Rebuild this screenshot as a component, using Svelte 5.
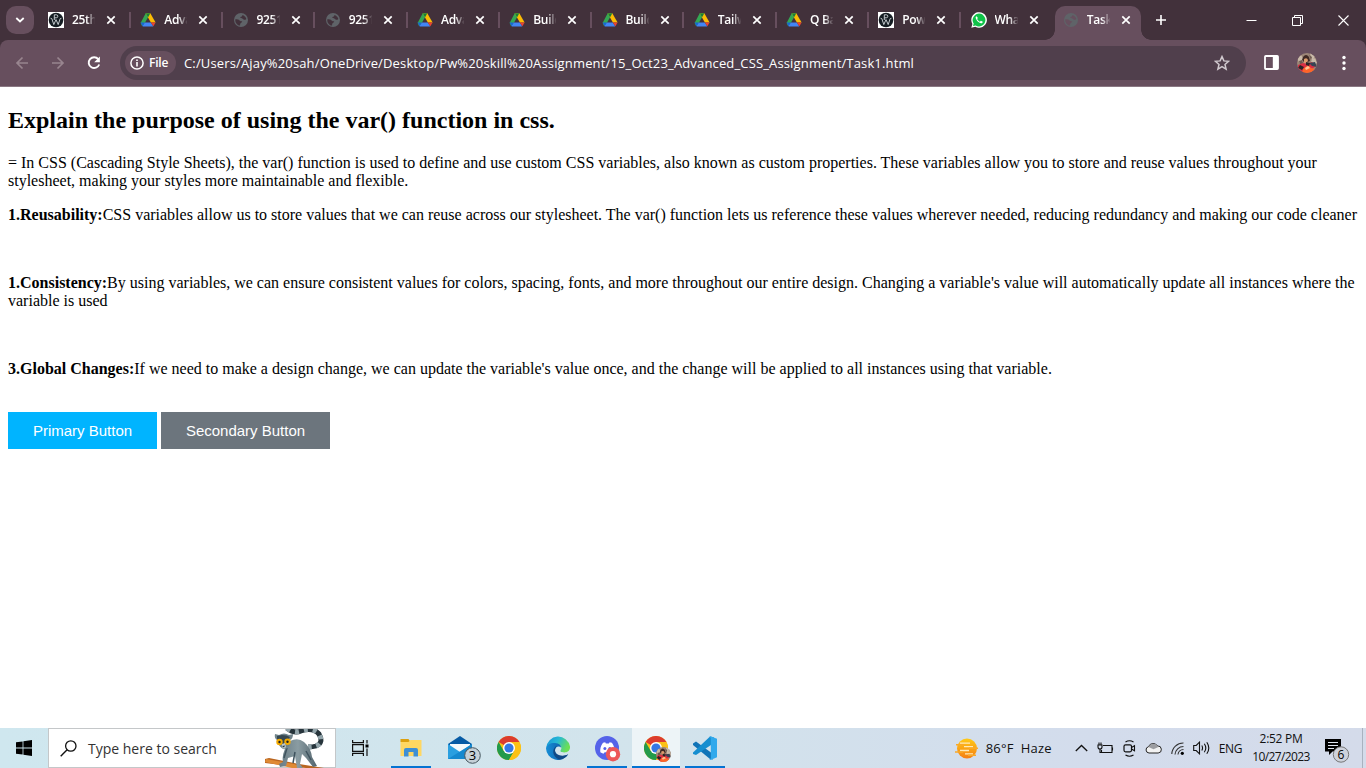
<script>
  const tabs = [
    { icon: 'pw', title: '25th' },
    { icon: 'drive', title: 'Adva' },
    { icon: 'globe', title: '9251' },
    { icon: 'globe', title: '9251' },
    { icon: 'drive', title: 'Adva' },
    { icon: 'drive', title: 'Build' },
    { icon: 'drive', title: 'Build' },
    { icon: 'drive', title: 'Tailw' },
    { icon: 'drive', title: 'Q Ba' },
    { icon: 'pw', title: 'Pow' },
    { icon: 'whatsapp', title: 'Wha' },
    { icon: 'globe', title: 'Task', active: true }
  ];
</script>

{#snippet favicon(name)}
  <svg class="fav" width="16" height="16" viewBox="0 0 16 16">
    {#if name === 'pw'}
      <rect width="16" height="16" fill="#fff" />
      <circle cx="8" cy="8" r="7.3" fill="#151c22" />
      <path d="M6.300 8V2.800h2a1.500 1.500 0 0 1 0 3H6.300M2.600 6.300l1.200.3 2 6L8 7.600l2.200 5 2-6 1.200-.3" fill="none" stroke="#c3c8cc" stroke-width="1" />
    {:else if name === 'drive'}
      <path d="M5.7 1.3h4.6L4.1 12.2l-2 2L.6 11.1z" fill="#34a853" />
      <path d="M5.7 1.3h4.6l5.3 9.3h-4.7L8 5.5z" fill="#fbbc04" />
      <path d="M5.7 1.3h4.6L8 5.5z" fill="#188038" />
      <path d="M4.8 10.4h6l2.5 4H3.1L2.4 14z" fill="#4285f4" />
      <path d="M.6 10.4h4.2l-2.2 3.8z" fill="#1967d2" />
      <path d="M10.8 10.4h4.8l-2.2 3.8z" fill="#ea4335" />
    {:else if name === 'globe'}
      <circle cx="8" cy="8" r="7" fill="#5f6368" />
      <path d="M2.3 7.2c2 .1 3.6.2 4.1 1.1.5 1 1.4.9 2.8.9-.2 1.7-1.8 1.4-2 2.9L7 13.6C4 13.2 2 10.7 2.3 7.2zM7.4 5.9c-.2-1.5 1.9-.8 2-2.9 1.8.5 3.4 2 3.9 4-.8 1-2.3 1.2-3 .3-.6-.8-1.6-1.4-2.9-1.4z" fill="var(--globe-land)" />
    {:else}
      <path d="M.3 15.8 1.4 12A7.8 7.8 0 1 1 4.3 14.8z" fill="#fff" />
      <path d="m2 14.1.7-2.5a6.4 6.4 0 1 1 2 1.9z" fill="#10c249" />
      <path d="M5.5 4.2c-.7.3-1 1.2-.7 2.1.8 2.5 2.8 4.5 5.1 5 1 .2 2-.7 1.9-1.6l-1.9-1-1 1C7.600 9.100 6.700 8.100 6.100 7l.8-.9z" fill="#fff" />
    {/if}
  </svg>
{/snippet}

{#snippet chrome()}
  <svg width="24" height="24" viewBox="0 0 24 24">
    <circle cx="12" cy="12" r="12" fill="#fbc116" />
    <path d="M12 12 1.600 6A12 12 0 0 1 22.400 6H12z" fill="#dc3c2e" />
    <path d="M1.600 6A12 12 0 0 0 12 24l5.200-9L12 12 6.800 15z" fill="#239a4b" />
    <path d="M12 6h10.400A12 12 0 0 1 12 24l5.200-9z" fill="#fbc116" />
    <circle cx="12" cy="12" r="6" fill="#fff" />
    <circle cx="12" cy="12" r="4.600" fill="#3478e5" />
  </svg>
{/snippet}

{#snippet avatar(size)}
  <svg width={size} height={size} viewBox="0 0 20 20">
    <defs><clipPath id="face{size}"><circle cx="10" cy="10" r="10" /></clipPath></defs>
    <g clip-path="url(#face{size})">
      <rect width="20" height="20" fill="#9c8677" />
      <path d="M0 5 4 2l3 5-4 4zM13 0l5 3-3 6zM14 8l4-3 2 5-4 2z" fill="#c9baa9" />
      <path d="M2 8l3-1 1 3-3 2zM12 2l3 2-1 3z" fill="#6d5a50" />
      <path d="M6 4q3-4 6 0l1 4-5 2-3-3z" fill="#3f2924" />
      <path d="M7 6q3-2 4 1l-1 3-3 0z" fill="#dc9b6d" />
      <path d="m1 12 5-2 4 1 5-2 4 4-4 3-8 4-6-2z" fill="#d92f43" />
      <path d="m12 10 6-1 2 5-5-1z" fill="#384454" />
      <path d="m6 16 5-4 3 3 4 1-4 5H5z" fill="#ff6428" />
      <path d="m3 12 4 2-2 3-4-2zM9 9l4 1-1 3-3-1z" fill="#2a2425" />
      <path d="m8 15 3-2 2 2-4 2z" fill="#ffc196" />
    </g>
  </svg>
{/snippet}

<div class="screen">
  <header class="tabstrip">
    <div class="tabsearch">
      <svg width="10" height="6" viewBox="0 0 10 6"><path d="m1.300 1 3.700 3.500L8.700 1" fill="none" stroke="#fff" stroke-width="1.800" /></svg>
    </div>
    <div class="tabs">
      {#each tabs as tab, i}
        <div class="tab" class:active={tab.active} class:nosep={i === 10}>
          {@render favicon(tab.icon)}
          <span class="title">{tab.title}</span>
          <svg class="x" width="10" height="10" viewBox="0 0 10 10"><path d="m1.300 1.300 7.400 7.400m0-7.400L1.300 8.700" stroke="#fff" stroke-width="1.700" /></svg>
        </div>
      {/each}
    </div>
    <svg class="plus" width="12" height="12" viewBox="0 0 12 12"><path d="M6 1v10M1 6h10" stroke="#fff" stroke-width="1.600" /></svg>
    <div class="wincontrols">
      <svg width="11" height="11" viewBox="0 0 11 11"><path d="M.5 5.500h10" stroke="#fff" /></svg>
      <svg width="11" height="11" viewBox="0 0 11 11"><path d="M.5 2.500h8v8h-8zM2.500 2.500v-2h8v8h-2" fill="none" stroke="#fff" /></svg>
      <svg width="11" height="11" viewBox="0 0 11 11"><path d="m.5.5 10 10m0-10-10 10" stroke="#fff" stroke-width="1.100" /></svg>
    </div>
  </header>

  <div class="toolbarwrap">
    <div class="toolbar">
      <svg width="14" height="14" viewBox="0 0 14 14"><path d="M13 7H2m5.500-5.500L2 7l5.500 5.500" fill="none" stroke="#98858f" stroke-width="1.700" /></svg>
      <svg width="14" height="14" viewBox="0 0 14 14"><path d="M1 7h11M6.500 1.500 12 7l-5.500 5.500" fill="none" stroke="#98858f" stroke-width="1.700" /></svg>
      <svg width="14" height="14" viewBox="0 0 14 14"><path d="M11.300 3.200A5.400 5.400 0 1 0 12.200 8.500" fill="none" stroke="#fff" stroke-width="1.900" /><path d="M12.900.5v5.800H7.200z" fill="#fff" /></svg>
      <div class="omnibox">
        <div class="chip">
          <svg width="14" height="14" viewBox="0 0 14 14"><circle cx="7" cy="7" r="6.100" fill="none" stroke="#fff" stroke-width="1.500" /><path d="M7 6v4.500M7 3.400v1.600" stroke="#fff" stroke-width="1.600" /></svg>
          <span>File</span>
        </div>
        <span class="url">C:/Users/Ajay%20sah/OneDrive/Desktop/Pw%20skill%20Assignment/15_Oct23_Advanced_CSS_Assignment/Task1.html</span>
        <svg class="star" width="16" height="16" viewBox="0 0 16 16"><path d="m8 1.600 1.900 4.300 4.700.4L11 9.500l1.100 4.600L8 11.700l-4.100 2.400L5 9.500 1.400 6.300l4.700-.4z" fill="none" stroke="#d1cacf" stroke-width="1.500" /></svg>
      </div>
      <svg class="panel" width="15" height="15" viewBox="0 0 15 15"><rect x="1" y="1" width="13" height="13" rx=".8" fill="none" stroke="#fff" stroke-width="1.800" /><path d="M8.800 1H14v13H8.800z" fill="#fff" /></svg>
      <span class="me">{@render avatar(20)}</span>
      <svg width="4" height="16" viewBox="0 0 4 16" fill="#fff"><circle cx="2" cy="2.500" r="1.700" /><circle cx="2" cy="8" r="1.700" /><circle cx="2" cy="13.500" r="1.700" /></svg>
    </div>
  </div>

  <main>
    <h2>Explain the purpose of using the var() function in css.</h2>
    <p>= In CSS (Cascading Style Sheets), the var() function is used to define and use custom CSS variables, also known as custom properties. These variables allow you to store and reuse values throughout your<br />stylesheet, making your styles more maintainable and flexible.</p>
    <p><b>1.Reusability:</b>CSS variables allow us to store values that we can reuse across our stylesheet. The var() function lets us reference these values wherever needed, reducing redundancy and making our code cleaner</p>
    <br />
    <p><b>1.Consistency:</b>By using variables, we can ensure consistent values for colors, spacing, fonts, and more throughout our entire design. Changing a variable's value will automatically update all instances where the<br />variable is used</p>
    <br />
    <p><b>3.Global Changes:</b>If we need to make a design change, we can update the variable's value once, and the change will be applied to all instances using that variable.</p>
    <br />
    <div class="buttons">
      <button class="primary">Primary Button</button>
      <button class="secondary">Secondary Button</button>
    </div>
  </main>

  <footer>
    <div class="start">
      <svg width="16" height="16" viewBox="0 0 16 16"><path d="M0 2.300 6.600 1.400v6.200H0zM7.400 1.300 16 0v7.600H7.400zM0 8.400h6.600v6.200L0 13.700zM7.400 8.400H16V16l-8.600-1.300z" /></svg>
    </div>
    <div class="search">
      <svg width="17" height="17" viewBox="0 0 17 17"><circle cx="10.800" cy="6" r="5.200" fill="none" stroke="#111" stroke-width="1.300" /><path d="M7.100 9.700.7 16.200" stroke="#111" stroke-width="1.400" /></svg>
      <span>Type here to search</span>
      <svg class="lemur" width="62" height="39" viewBox="0 0 62 39">
        <defs>
          <linearGradient id="fur" x1="0" x2="1"><stop offset="0" stop-color="#687b84" /><stop offset=".5" stop-color="#8a9ca2" /><stop offset="1" stop-color="#53656e" /></linearGradient>
        </defs>
        <path d="M23-1q7 6 14 3 12-4 18 3 5 9-3 12-3 1-8 1" fill="none" stroke="#26343b" stroke-width="5" />
        <path d="M23-1q7 6 14 3 12-4 18 3 5 9-3 12-3 1-8 1" fill="none" stroke="#93a5ab" stroke-width="5" stroke-dasharray="4 5" />
        <path d="m1 30 4-1 30 6 25 4H42L1 34z" fill="#b96520" /><path d="m2 30 28 5 11 4H28L1 33z" fill="#df8a34" />
        <path d="M26 12q8-4 14 1 7 6 8 15l5 9-4 1-7-9-4-4-2 10 3 4h-6l-2-12-7 2-2 8-6 1-1-3 4-2q-2-10 7-20z" fill="url(#fur)" />
        <path d="m31 23-2 11M42 22l5 9M23 19l-3 10" stroke="#3f535e" fill="none" stroke-width="1.500" />
        <path d="m11 5 4 1q5-3 10 0l4-1q0 5-3 6 1 5-4 9-4 1-7-4-3-2-2-5-3-2-2-6z" fill="#71848b" />
        <path d="m13 7 5-1q5 0 8 2l-3 4-2 4-4-1-4-4z" fill="#354750" />
        <circle cx="15.500" cy="13" r="3.200" fill="#f4ab00" /><circle cx="23.500" cy="12.800" r="3.200" fill="#f4ab00" />
        <circle cx="15.500" cy="13" r="1.200" fill="#1d2022" /><circle cx="23.500" cy="12.800" r="1.200" fill="#1d2022" />
        <path d="m18 15 3-1 1 4-2 2-2-2z" fill="#bec9ca" /><path d="m18 17 3-.5-1 2z" fill="#222d32" />
      </svg>
    </div>
    <div class="taskview">
      <svg width="17" height="16" viewBox="0 0 17 16"><path d="M.6 0v2.600h10.800V0M.6 4.600h10.800v6.800H.6zM.6 16v-2.600h10.800V16M15 0v3.500M15 8.500V16" fill="none" stroke="#111" stroke-width="1.200" /><path d="M13.500 4.500h3v3h-3z" /></svg>
    </div>
    <div class="apps">
      <div class="app open">
        <svg width="22" height="20" viewBox="0 0 22 20"><path d="M.5 1h8l2 3H.5z" fill="#dda00e" /><path d="M.5 4h8l2-2h11v16H.5z" fill="#ffd762" /><path d="M4 18.500V12a2 2 0 0 1 2-2h10a2 2 0 0 1 2 2v6.500h-4.500V14h-5v4.500z" fill="#3e8fd4" /></svg>
      </div>
      <div class="app">
        <svg class="mail" width="34" height="30" viewBox="0 0 34 30">
          <path d="m1 9 12-8 12 8v15H1z" fill="#075ba5" /><path d="M3 9h20v8H3z" fill="#f5fafc" /><path d="m1 9 12 8 12-8v15H1z" fill="#2a9fe0" /><path d="M1 24 25 9v15z" fill="#1689cf" />
          <circle cx="25.500" cy="20.500" r="7.800" fill="#c5d0d7" stroke="#46565f" /><text x="25.500" y="25" text-anchor="middle">3</text>
        </svg>
      </div>
      <div class="app">{@render chrome()}</div>
      <div class="app">
        <svg width="24" height="24" viewBox="0 0 24 24">
          <defs><linearGradient id="edge-top" x1="0" x2="1" y2=".4"><stop stop-color="#148fd8" /><stop offset=".5" stop-color="#27b9d5" /><stop offset="1" stop-color="#6bdf56" /></linearGradient><linearGradient id="edge-low" x1="0" x2="1"><stop stop-color="#168ed6" /><stop offset="1" stop-color="#0b509e" /></linearGradient></defs>
          <path d="M.2 12A12 12 0 0 1 24 10.500c.4 5-4 6.600-8 5.600-2-.5-1.700-1.400-1-2.500 1.300-2-1-5.600-5.500-5.600C5 8 1.500 10 .2 12z" fill="url(#edge-top)" />
          <path d="M0 12.500C.5 8.800 4.500 6.800 9 7c4 .2 6 2.600 6 4.500-2-2.200-6-.6-6 2.800 0 5 7 8 13.200 4A12 12 0 0 1 0 12.500z" fill="url(#edge-low)" />
          <path d="M11 9.500c-5 2.500-5.500 10.500 2 14 3.600.2 7-1.800 9.200-5.200C16 21.500 9 19 9 14.300c0-1.700.8-2.800 2-4.800z" fill="#104985" />
        </svg>
      </div>
      <div class="app open">
        <svg class="discord" width="26" height="26" viewBox="0 0 26 26"><circle cx="12" cy="12" r="12" fill="#5563e9" /><path d="m8 6.800 2.200-.6.7 1.300h3l.7-1.300 2.300.6c2.200 3 3 6.400 2.400 9.500l-3.100 1.500-1.300-1.600h-5.200l-1.300 1.600-3.100-1.500c-.4-3.500.5-6.800 2.700-9.500z" fill="#fff" /><circle cx="9.900" cy="12.500" r="1.500" fill="#5563e9" /><circle cx="14.800" cy="12.500" r="1.500" fill="#5563e9" /><circle cx="18" cy="18.200" r="7.200" fill="#ed5759" /><circle cx="18" cy="18.200" r="3.100" fill="#fff" /></svg>
      </div>
      <div class="app current">{@render chrome()}<span class="badge">{@render avatar(15)}</span></div>
      <div class="app open">
        <svg width="24" height="24" viewBox="0 0 24 24"><path d="m0 7.500 3-2L20 18v5.500l-3-.5L0 9z" fill="#1174b7" /><path d="M0 16.500 17 .5l4 1V7L3 19l-3-1z" fill="#168ed0" /><path d="m17.500.2 6.500 2.600v18.400L17.500 24l-1.200-.8 1.500-.8V1.800L16.300 1z" fill="#31a9ec" /></svg>
      </div>
    </div>
    <div class="weather">
      <svg width="23" height="21" viewBox="0 0 23 21"><defs><linearGradient id="sun" x2="0" y2="1"><stop stop-color="#ffca18" /><stop offset="1" stop-color="#f57e13" /></linearGradient></defs><circle cx="12" cy="10.500" r="10" fill="url(#sun)" /><path d="M5 5.200h10M9 8.700h9M5 12.500h9M10 15.800h8" stroke="#ffe9b8" stroke-width="1.300" /><path d="M1 6.800h8M14 10.300h9M0 14h8M13 17.200h8" stroke="#f9a928" stroke-width="1.400" /></svg>
      <span>86°F&nbsp; Haze</span>
    </div>
    <div class="tray">
      <svg width="13" height="8" viewBox="0 0 13 8"><path d="m.8 7 5.700-5.500L12.200 7" fill="none" stroke="#111" stroke-width="1.300" /></svg>
      <svg width="17" height="13" viewBox="0 0 17 13"><path d="M6 3.500h9v7H4.500V8M15.500 5.500v3M1 3h4v2a2 2 0 0 1-4 0zM2 3V.5M4 3V.5M3 7v3.500h2" fill="none" stroke="#111" stroke-width="1.100" /></svg>
      <svg width="13" height="17" viewBox="0 0 13 17"><rect x="1" y="4.800" width="7.500" height="7" rx="1.500" fill="none" stroke="#111" stroke-width="1.200" /><path d="m8.500 7.500 3-1.700v5l-3-1.700M2.500 2q4-2.500 8 0M2.500 15q4 2.500 8 0" fill="none" stroke="#111" stroke-width="1.100" /></svg>
      <svg width="17" height="12" viewBox="0 0 17 12"><path d="M4 11a3.200 3.200 0 0 1-.5-6.300A5 5 0 0 1 12.500 4 3.500 3.500 0 0 1 13.200 11z" fill="#f2f2f2" stroke="#222" /><path d="M3.500 5A5 5 0 0 1 12.500 4.200l1.500.6-5.500 2.400z" fill="#9c9da1" /></svg>
      <svg width="13" height="13" viewBox="0 0 13 13"><path d="M.8 12A11.500 11.500 0 0 1 12.500 1M4 12.500a8.500 8.500 0 0 1 8.500-8M7 12.500a5.500 5.500 0 0 1 5.500-5" fill="none" stroke="#333" stroke-width="1.100" /><circle cx="11.300" cy="11.300" r="1.600" /></svg>
      <svg width="17" height="14" viewBox="0 0 17 14"><path d="M.7 4.500h2.500l3.300-3.300v11.600L3.200 9.500H.7zM8.800 4.500q1.500 2.500 0 5M11.300 2.800q3 4.200 0 8.400M13.800 1.200q4 5.800 0 11.600" fill="none" stroke="#111" stroke-width="1.100" /></svg>
      <span class="lang">ENG</span>
    </div>
    <div class="clock"><span class="time">2:52 PM</span><span class="date">10/27/2023</span></div>
    <svg class="notes" width="25" height="25" viewBox="0 0 25 25"><path d="M0 0h16v12.500H7.500L4 16v-3.500H0z" /><path d="M3 3.500h10M3 6.500h10M3 9.500h6" stroke="#dfe5ef" /><circle cx="16" cy="15.500" r="7.700" fill="#ced2dc" stroke="#777" /><text x="16" y="19.500" text-anchor="middle">6</text></svg>
    <i class="peek"></i>
  </footer>
</div>

<style>
  :global(body) { margin: 0; overflow: hidden; }
  svg { display: block; flex: none; }
  .screen { width: 1366px; height: 768px; display: flex; flex-direction: column; background: #fff; overflow: hidden; font-family: 'Open Sans', sans-serif; }
  .tabstrip { height: 40px; flex: none; display: flex; align-items: center; background: #42313b; }
  .tabsearch { width: 28px; height: 28px; margin-left: 6px; border-radius: 10px; background: #674f5e; display: grid; place-items: center; }
  .tabs { display: flex; margin-left: 4.500px; align-self: flex-end; height: 34px; }
  .tab { --globe-land: #42313b; width: 92.250px; height: 34px; box-sizing: border-box; padding: 0 0 6px 9.500px; display: flex; align-items: center; position: relative; }
  .tab:not(.active):not(.nosep)::after { content: ''; position: absolute; right: 0; top: 6px; width: 2px; height: 16px; background: #674f5e; }
  .tab.active { --globe-land: #674f5e; width: 86px; background: #674f5e; border-radius: 10px 10px 0 0; margin-left: 1.500px; padding-left: 8px; }
  .tab.active::before, .tab.active::after { content: ''; position: absolute; bottom: 0; width: 10px; height: 10px; }
  .tab.active::before { left: -10px; background: radial-gradient(circle at 0 0, transparent 9.500px, #674f5e 10px); }
  .tab.active::after { right: -10px; background: radial-gradient(circle at 100% 0, transparent 9.500px, #674f5e 10px); }
  .title { width: 24px; margin-left: 8px; overflow: hidden; white-space: nowrap; color: #fff; font: 600 12px/16px 'Open Sans', sans-serif; letter-spacing: -.3px; mask-image: linear-gradient(90deg, #000 60%, transparent 98%); }
  .x { margin-left: 10px; }
  .plus { margin-left: 14px; }
  .wincontrols { display: flex; gap: 35px; margin-left: auto; margin-right: 17px; }
  .toolbarwrap { background: #42313b; flex: none; }
  .toolbar { height: 47px; box-sizing: border-box; padding: 0 20px 1px 15px; border-bottom: 1px solid #8a7883; border-radius: 8px 8px 0 0; background: #674f5e; display: flex; align-items: center; }
  .toolbar > svg + svg { margin-left: 22px; }
  .omnibox { width: 1126px; flex: none; height: 34px; margin-left: 19px; border-radius: 17px; background: #503f4c; display: flex; align-items: center; }
  .chip { width: 51px; height: 24px; box-sizing: border-box; margin-left: 5px; padding-left: 5px; border-radius: 12px; background: #674f5e; display: flex; align-items: center; gap: 5px; color: #fff; font-size: 12px; font-weight: 600; letter-spacing: -.2px; }
  .url { margin-left: 8px; white-space: nowrap; color: #fff; font-size: 13px; letter-spacing: .152px; }
  .star { margin-left: auto; margin-right: 16px; }
  .toolbar > svg.panel { margin-left: 18px; }
  .me { margin: 0 auto 0 18px; }
  main { flex: 1; padding: 0 8px; color: #000; font: 16px/18px 'Liberation Serif', serif; white-space: nowrap; }
  h2 { margin: 20px 0; font-size: 24px; line-height: 27px; }
  p { margin: 16px 0; }
  .buttons { display: flex; gap: 4px; margin-top: 0; }
  button { border: 0; height: 37px; padding: 0; color: #fff; font: 15px/17px 'Liberation Sans', sans-serif; }
  .primary { width: 149px; background: #00b4ff; }
  .secondary { width: 169px; background: #6c757d; }
  footer { height: 40px; flex: none; display: flex; align-items: center; background: linear-gradient(90deg, #cfe7ef, #d2e4ec 45%, #d3dcec 80%, #d4dbea); color: #111; }
  .start { width: 48px; display: grid; place-items: center; }
  .search { width: 288px; height: 40px; box-sizing: border-box; border: 1px solid #c4c7c9; background: #fff; padding-left: 11px; display: flex; align-items: center; font-size: 14px; color: #333; }
  .search span { margin-left: 11px; white-space: nowrap; }
  .lemur { margin-left: auto; margin-right: 9px; }
  .taskview { width: 50px; padding-left: 16px; box-sizing: border-box; }
  .apps { display: flex; margin-left: 1px; }
  .app { width: 48px; height: 40px; margin-right: 1px; display: grid; place-items: center; position: relative; }
  .open::after, .current::after { content: ''; position: absolute; left: 4px; right: 4px; bottom: 0; height: 2px; background: #0473d2; }
  .current { background: #edf4f7; }
  .current::after { left: 0; right: 0; }
  .badge { position: absolute; left: 24px; top: 19px; }
  .mail { margin-left: 7px; margin-top: 4px; }
  .mail text { font: 13px 'Open Sans', sans-serif; }
  .discord { margin: 2px 0 0 2px; }
  .weather { margin-left: auto; display: flex; align-items: center; gap: 8px; font-size: 13px; white-space: nowrap; letter-spacing: .2px; }
  .tray { display: flex; align-items: center; margin-left: 23px; gap: 9px; }
  .lang { font-size: 12px; letter-spacing: -.4px; }
  .clock { width: 70px; margin-left: 4px; display: flex; flex-direction: column; align-items: center; font-size: 12px; line-height: 18px; letter-spacing: -.6px; }
  .time { letter-spacing: -.3px; }
  .notes { margin: 6px 0 0 9px; }
  .notes text { font: 12px 'Open Sans', sans-serif; }
  .peek { width: 4px; height: 40px; margin-left: 12px; box-sizing: border-box; border-left: 1px solid #a9b2bf; }
</style>
